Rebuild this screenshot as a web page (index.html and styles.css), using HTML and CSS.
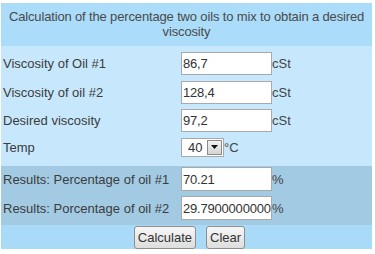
FILE: index.html
```html
<!DOCTYPE html>
<html lang="en">
<head>
    <meta charset="UTF-8">
    <meta name="viewport" content="width=device-width, initial-scale=1.0">
    <title>Oil mix</title>
    <link rel="stylesheet" href="styles.css">
</head>
<body>
    <div class="calc">
        <div class="title">Calculation of the percentage two oils to mix to obtain a desired viscosity</div>
        <div class="inputs">
            <div class="row">
                <label class="label">Viscosity of Oil #1</label>
                <input class="box" type="text" value="86,7"><span class="unit">cSt</span>
            </div>
            <div class="row">
                <label class="label">Viscosity of oil #2</label>
                <input class="box" type="text" value="128,4"><span class="unit">cSt</span>
            </div>
            <div class="row">
                <label class="label">Desired viscosity</label>
                <input class="box" type="text" value="97,2"><span class="unit">cSt</span>
            </div>
            <div class="row">
                <label class="label">Temp</label>
                <span class="select-wrap">
                    <select class="select">
                        <option>40</option>
                        <option>100</option>
                    </select>
                    <span class="arrow"><svg width="7" height="4" viewBox="0 0 7 4"><path d="M0 0h7L3.5 4z" fill="#111"/></svg></span>
                </span><span class="unit">°C</span>
            </div>
        </div>
        <div class="results">
            <div class="row">
                <label class="label">Results: Percentage of oil #1</label>
                <input class="box tall" type="text" value="70.21" readonly><span class="unit">%</span>
            </div>
            <div class="row">
                <label class="label">Results: Porcentage of oil #2</label>
                <input class="box tall" type="text" value="29.7900000000" readonly><span class="unit">%</span>
            </div>
        </div>
        <div class="actions">
            <button class="btn" type="button">Calculate</button>
            <button class="btn" type="button">Clear</button>
        </div>
    </div>
</body>
</html>
```

FILE: styles.css
```css
body {
    margin: 0;
    font-family: "Liberation Sans", Arial, sans-serif;
    font-size: 13px;
    color: #3c3c3c;
    background: #fff;
}
.calc {
    width: 371px;
    margin: 3px 0 0 1px;
}
.title {
    background: #abdcfa;
    color: #4a4a4a;
    text-align: center;
    line-height: 15px;
    letter-spacing: -0.15px;
    padding: 6px 0 7px;
}
.inputs {
    background: #c7e8fc;
    padding: 4px 0 2px;
}
.inputs .row {
    height: 28.5px;
}
.results {
    background: #a2cae3;
    padding: 1px 0 0;
}
.results .row {
    height: 29px;
}
.row {
    display: flex;
    align-items: baseline;
}
.inputs .row .box,
.inputs .row .select-wrap {
    margin-top: 2px;
}
.label {
    width: 178px;
    padding-left: 2px;
    flex: none;
}
.box {
    box-sizing: border-box;
    width: 91px;
    height: 23px;
    border: 1px solid #a9a9a9;
    background: #fff;
    font-family: inherit;
    font-size: 13px;
    letter-spacing: -0.2px;
    color: #333;
    padding: 0 0 0 1px;
    margin: 0;
}
.box.tall {
    height: 24px;
}
.unit {
    color: #444;
}
.select-wrap {
    position: relative;
    display: inline-block;
}
.select {
    appearance: none;
    -webkit-appearance: none;
    box-sizing: border-box;
    width: 43px;
    height: 19px;
    border: 1px solid #a9a9a9;
    border-radius: 0;
    background: #fff;
    font-family: inherit;
    font-size: 13px;
    color: #333;
    padding: 0 0 0 6px;
    margin: 0;
}
.arrow {
    position: absolute;
    right: 2px;
    top: 2px;
    width: 13px;
    height: 13px;
    border: 1px solid #8c8c8c;
    background: linear-gradient(#f2f2f2, #d4d4d4);
    display: flex;
    align-items: center;
    justify-content: center;
    pointer-events: none;
}
.actions {
    background: #a9dbf9;
    padding: 1px 0 0 6px;
    height: 23px;
    display: flex;
    justify-content: center;
    gap: 10px;
}
.btn {
    box-sizing: border-box;
    height: 23px;
    border: 1px solid #8e8e8e;
    border-radius: 3px;
    background: linear-gradient(#f7f7f7, #dddddd);
    font-family: inherit;
    font-size: 13px;
    color: #333;
    padding: 0 3px;
    margin: 0;
}
```
